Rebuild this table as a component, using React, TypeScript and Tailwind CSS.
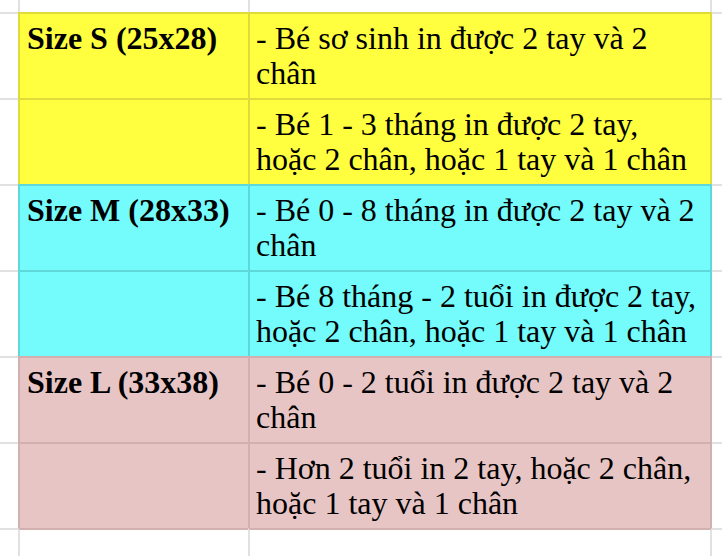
import React from "react";

type Block = {
  fill: string;
  border: string;
  label: string;
  lines1: string[];
  lines2: string[];
};

const blocks: Block[] = [
  {
    fill: "bg-[#ffff40]",
    border: "border-[#dedb3b]",
    label: "Size S (25x28)",
    lines1: ["- Bé sơ sinh in được 2 tay và 2", "chân"],
    lines2: ["- Bé 1 - 3 tháng in được 2 tay,", "hoặc 2 chân, hoặc 1 tay và 1 chân"],
  },
  {
    fill: "bg-[#74fbfc]",
    border: "border-[#5fd8da]",
    label: "Size M (28x33)",
    lines1: ["- Bé 0 - 8 tháng in được 2 tay và 2", "chân"],
    lines2: ["- Bé 8 tháng - 2 tuổi in được 2 tay,", "hoặc 2 chân, hoặc 1 tay và 1 chân"],
  },
  {
    fill: "bg-[#e8c5c5]",
    border: "border-[#d2b0b0]",
    label: "Size L (33x38)",
    lines1: ["- Bé 0 - 2 tuổi in được 2 tay và 2", "chân"],
    lines2: ["- Hơn 2 tuổi in 2 tay, hoặc 2 chân,", "hoặc 1 tay và 1 chân"],
  },
];

function Lines({ lines }: { lines: string[] }) {
  return (
    <div className="flex flex-col">
      {lines.map((l, i) => (
        <span key={i} className="whitespace-nowrap">
          {l}
        </span>
      ))}
    </div>
  );
}

function Row({
  fill,
  border,
  label,
  lines,
}: {
  fill: string;
  border: string;
  label?: string;
  lines: string[];
}) {
  return (
    <div className="flex h-[86px]">
      <div className="w-[18px] border-t-2 border-[#e1e1e1]" />
      <div
        className={`w-[230px] border-t-2 border-l-2 ${border} ${fill} pl-[7px] pt-[7px] font-bold`}
      >
        {label}
      </div>
      <div
        className={`w-[464px] border-t-2 border-l-2 border-r-2 ${border} ${fill} pl-[6px] pt-[7px]`}
      >
        <Lines lines={lines} />
      </div>
      <div className="flex-1 border-t-2 border-[#e1e1e1]" />
    </div>
  );
}

export default function App() {
  return (
    <div className="w-[722px] h-[556px] overflow-hidden bg-white text-black text-[32px] leading-[35px] font-['Liberation_Serif','Times_New_Roman',serif]">
      <div className="flex h-[12px]">
        <div className="w-[18px]" />
        <div className="w-[230px] border-l-2 border-[#e1e1e1]" />
        <div className="w-[464px] border-l-2 border-r-2 border-[#e1e1e1]" />
        <div className="flex-1" />
      </div>
      {blocks.map((b, i) => (
        <React.Fragment key={i}>
          <Row fill={b.fill} border={b.border} label={b.label} lines={b.lines1} />
          <Row fill={b.fill} border={b.border} lines={b.lines2} />
        </React.Fragment>
      ))}
      <div className="flex h-[40px]">
        <div className="w-[18px] border-t-2 border-[#e1e1e1]" />
        <div className="w-[230px] border-t-2 border-t-[#d2b0b0] border-l-2 border-l-[#e1e1e1]" />
        <div className="w-[464px] border-t-2 border-t-[#d2b0b0] border-l-2 border-r-2 border-l-[#e1e1e1] border-r-[#e1e1e1]" />
        <div className="flex-1 border-t-2 border-[#e1e1e1]" />
      </div>
    </div>
  );
}
